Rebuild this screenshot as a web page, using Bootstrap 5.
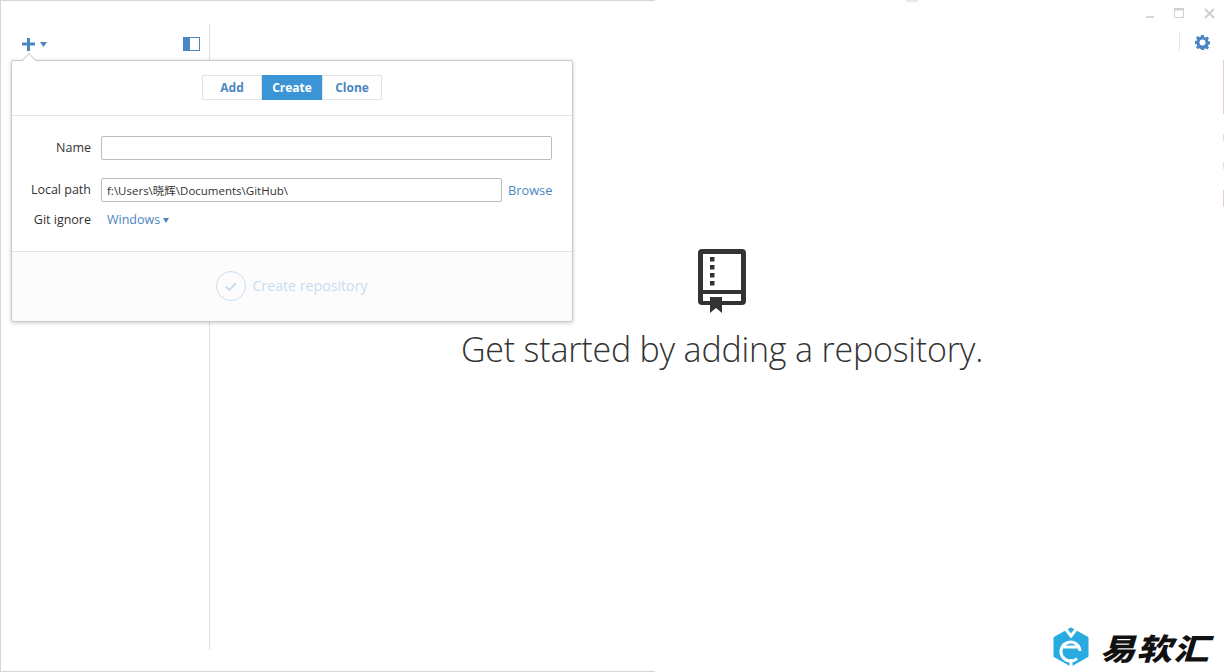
<!DOCTYPE html>
<html lang="en">
<head>
<meta charset="utf-8">
<title>GitHub Desktop</title>
<link href="https://cdn.jsdelivr.net/npm/bootstrap@5.3.0/dist/css/bootstrap.min.css" rel="stylesheet">
<style>
html,body{height:672px;overflow:hidden;background:#fff}
body{font-family:"Open Sans","Noto Sans CJK SC",sans-serif;font-size:13px;color:#333}
.shell{position:relative;width:1224px;height:672px}
.shell::before{content:"";position:absolute;left:0;top:0;width:655px;height:672px;border:solid #d9d5d0;border-width:1px 0 1px 1px;pointer-events:none}
.sidebar{width:210px;height:672px;padding:24px 0 22px 0}
.side-inner{height:100%;border-right:1px solid #dedede;padding:13px 9px 0 22px}
.add-tool{background:none;border:0;padding:0;line-height:0;gap:5px}
.main-area{height:672px;padding-left:10px}
.win-tools{padding:8px 9px 0 0;gap:19px}
.gear-row{padding:13px 14px 0 0;gap:15px}
.gear-sep{width:1px;height:18px;background:#e4e4e4}
.hero{padding-top:197px}
.hero-title{font-size:34px;font-weight:300;color:#333;margin:12px 0 0;line-height:46px;letter-spacing:-.2px;white-space:nowrap}
.pop{position:absolute;left:11px;top:60px;width:562px;height:262px;background:#fff;border:1px solid #c9c9c9;border-radius:2px;box-shadow:0 1px 4px rgba(0,0,0,.2);z-index:5}
.pop::before{content:"";position:absolute;left:12px;top:-6px;width:10px;height:10px;background:#fff;border:1px solid #d0d0d0;border-width:1px 0 0 1px;transform:rotate(45deg)}
.pop-head{height:55px;padding-top:14px;border-bottom:1px solid #e4e4e4}
.seg .btn{font-size:12px;font-weight:700;height:25px;padding:0;line-height:23px;border-radius:0;color:#4a86c0;background:#fff;border:1px solid #e4e4e4}
.seg .seg-a{width:60px}.seg .seg-b{width:60px;background:#3b94d6;border-color:#3b94d6;color:#fff}.seg .seg-c{width:60px}
.pop-body{height:135px;padding:20px 20px 0 0}
.lbl{width:79px;text-align:right;margin:0 10px 0 0;color:#333;flex:none;font-size:12.5px}
.field{height:24px;border:1px solid #bcbcbc;border-radius:2px;padding:0 5px;font-size:11.5px;color:#333;box-shadow:none;min-height:0;font-family:"Open Sans","Noto Sans CJK SC",sans-serif}
.path-row{margin-top:18px}
.ignore-row{margin-top:9px}
.blue{color:#4a86c0;text-decoration:none;white-space:nowrap}
.browse-link{margin-left:6px;width:44px;padding-top:1px;font-size:12.8px}
.ignore-link{margin-left:6px;font-size:12.5px}
.tri{display:inline-block;width:0;height:0;border:solid transparent;border-width:5px 3.5px 0;border-top-color:#4a86c0;vertical-align:1px;margin-left:3px}
.pop-foot{height:70px;padding-bottom:2px;background:#fcfcfc;border-top:1px solid #e4e4e4;border-radius:0 0 2px 2px}
.create-txt{color:#c9dcf0;font-size:14.2px;margin-left:6px}
.brand{position:absolute;left:1052px;top:627px;gap:10px;width:172px}
.brand-txt{font-family:"Noto Sans CJK SC",sans-serif;font-weight:900;font-size:30px;line-height:40px;letter-spacing:1px;color:#111;font-style:italic;white-space:nowrap;transform:scaleX(1.18);transform-origin:left center}
.edge{position:absolute;right:0;top:60px;width:1px;height:150px;background:linear-gradient(#d9d3d3 0 54px,#fff 54px 74px,#e4dede 74px 81px,#fff 81px 102px,#e4dede 102px 109px,#fff 109px 130px,#d9d3d3 130px 147px,#fff 147px)}
.top-mark{position:absolute;left:906px;top:0;width:12px;height:2px;background:#e8e8e8}
</style>
</head>
<body>
<div class="shell d-flex">
  <aside class="sidebar flex-shrink-0">
    <div class="side-inner d-flex justify-content-between align-items-start">
      <button class="add-tool d-flex align-items-center" type="button" aria-label="Add">
        <svg width="13" height="14" viewBox="0 0 13 14"><path d="M5 1h3v4.500h5v3H8V14H5V8.500H0v-3h5z" fill="#4a86c0"/></svg>
        <svg width="7" height="5" viewBox="0 0 7 5"><path d="M0 0h7L3.500 5z" fill="#4a86c0"/></svg>
      </button>
      <svg width="17" height="14" viewBox="0 0 17 14"><rect x=".5" y=".5" width="16" height="13" fill="#fff" stroke="#4a86c0"/><rect width="7" height="14" fill="#4a86c0"/></svg>
    </div>
  </aside>
  <main class="main-area flex-grow-1 d-flex flex-column">
    <div class="win-tools d-flex justify-content-end align-items-start">
      <svg width="10" height="12" viewBox="0 0 10 12"><rect x="1" y="8" width="8" height="2" fill="#d5d5d5"/></svg>
      <svg width="11" height="11" viewBox="0 0 11 11"><path d="M.5.500h9v9h-9z" fill="none" stroke="#d0d0d0"/><rect width="10" height="2.500" fill="#d0d0d0"/></svg>
      <svg width="11" height="11" viewBox="0 0 11 11"><path d="M1 1l9 9M10 1l-9 9" stroke="#d0d0d0" stroke-width="2"/></svg>
    </div>
    <div class="gear-row d-flex justify-content-end align-items-center">
      <span class="gear-sep"></span>
      <svg width="15" height="15" viewBox="0 0 16 16"><path fill="#4a86c0" fill-rule="evenodd" d="M6.600 0h2.800l.4 2.200 1.300.6L13 1.500l2 2-1.300 1.900.6 1.300 2.200.4v2.800l-2.200.4-.6 1.300 1.300 1.900-2 2-1.900-1.300-1.300.6-.4 2.200H6.600l-.4-2.200-1.300-.6L3 15l-2-2 1.300-1.900-.6-1.300L-.5 9.400V6.600l2.200-.4.600-1.300L1 3l2-2 1.900 1.300 1.300-.6zM8 4.800a3.200 3.200 0 100 6.400 3.200 3.200 0 000-6.400z"/></svg>
    </div>
    <section class="hero d-flex flex-column align-items-center">
      <svg width="48" height="66" viewBox="0 0 48 66">
        <path fill="#333" fill-rule="evenodd" d="M4 1h40a4 4 0 014 4v48a4 4 0 01-4 4H4a4 4 0 01-4-4V5a4 4 0 014-4zM5 6v36h38V6zM5 46v7h38v-7z"/>
        <path fill="#333" d="M12 9h4.500v4.500H12zM12 17h4.500v4.500H12zM12 25h4.500v4.500H12zM12 33h4.500v4.500H12zM12 49h12v16l-6-5-6 5z"/>
      </svg>
      <h1 class="hero-title">Get started by adding a repository.</h1>
    </section>
  </main>

  <div class="pop">
    <div class="pop-head d-flex justify-content-center">
      <div class="seg d-flex" role="group">
        <button type="button" class="btn seg-a">Add</button>
        <button type="button" class="btn seg-b">Create</button>
        <button type="button" class="btn seg-c">Clone</button>
      </div>
    </div>
    <div class="pop-body">
      <div class="d-flex align-items-center">
        <label class="lbl">Name</label>
        <input class="form-control field" type="text" aria-label="Name">
      </div>
      <div class="path-row d-flex align-items-center">
        <label class="lbl">Local path</label>
        <input class="form-control field" type="text" value="f:\Users\晓辉\Documents\GitHub\" aria-label="Local path">
        <a class="blue browse-link flex-shrink-0" href="#">Browse</a>
      </div>
      <div class="ignore-row d-flex align-items-center">
        <label class="lbl">Git ignore</label>
        <a class="blue ignore-link" href="#">Windows<span class="tri"></span></a>
      </div>
    </div>
    <div class="pop-foot d-flex justify-content-center align-items-center">
      <svg width="30" height="30" viewBox="0 0 30 30"><circle cx="15" cy="15" r="14.500" fill="none" stroke="#c9dcf0"/><path d="M10 15.500l3.500 3.500 6.500-7" fill="none" stroke="#c9dcf0" stroke-width="2"/></svg>
      <span class="create-txt">Create repository</span>
    </div>
  </div>

  <span class="edge"></span>
  <span class="top-mark"></span>
  <div class="brand d-flex align-items-center">
    <svg width="38" height="40" viewBox="0 0 38 40"><path fill="#29abe2" stroke="#29abe2" stroke-width="3" stroke-linejoin="round" d="M19 2l16 9v18L19 38 3 29V11z"/><path fill="none" stroke="#fff" stroke-width="3" d="M12 0l7 9 7-9M28 24a9.500 9.500 0 10-3 7.500M9.500 20H28M19 32v8"/></svg>
    <span class="brand-txt">易软汇</span>
  </div>
</div>
</body>
</html>
